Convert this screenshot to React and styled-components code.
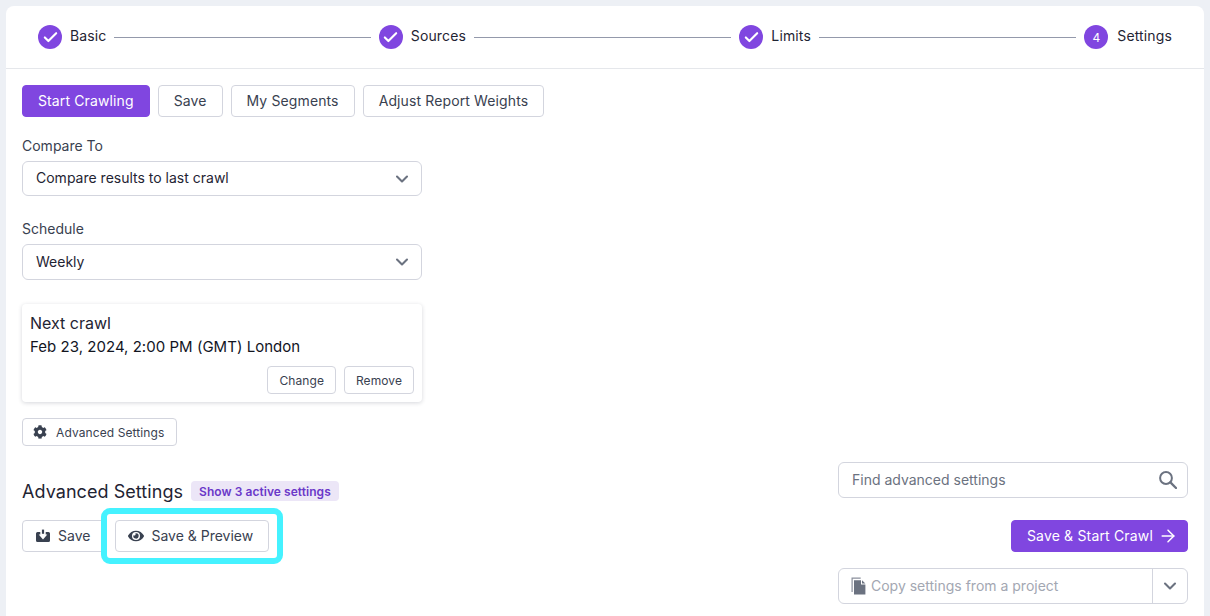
import React from "react";
import styled, { createGlobalStyle } from "styled-components";
import { FaCog, FaEye } from "react-icons/fa";
import { ArrowRight, Check, ChevronDown } from "lucide-react";

const Global = createGlobalStyle`
  html, body { margin: 0; padding: 0; height: 100%; overflow: hidden; }
  body { background: #edf0f5; font-family: Inter, "Liberation Sans", sans-serif; color: #1f2433; }
  * { box-sizing: border-box; }
`;

const Card = styled.main`
  margin: 6px 6px 0;
  height: 610px;
  background: #fff;
  border-radius: 8px 8px 0 0;
  overflow: hidden;
`;

const Stepper = styled.header`
  height: 63px;
  padding: 0 32px;
  display: flex;
  align-items: center;
  border-bottom: 1px solid #e5e7eb;
`;

const StepDot = styled.span`
  flex: none;
  width: 24px;
  height: 24px;
  border-radius: 50%;
  background: #8046e0;
  color: #fff;
  display: flex;
  align-items: center;
  justify-content: center;
  font-size: 12px;
`;

const StepLabel = styled.span`
  margin-left: ${(p) => p.$ml}px;
  padding-bottom: 3px;
  font-size: 14px;
  letter-spacing: 0.14px;
  color: #1f2433;
`;

const StepLine = styled.span`
  flex: 1;
  height: 1px;
  margin: 0 8px 0 ${(p) => p.$ml}px;
  background: #9499ab;
`;

const Body = styled.div`
  padding: 16px 16px 0;
`;

const Row = styled.div`
  display: flex;
  gap: ${(p) => p.$gap ?? 8}px;
  align-items: center;
`;

const Button = styled.button`
  height: ${(p) => p.$h ?? 32}px;
  padding: ${(p) => p.$padding ?? "0 15px"};
  display: inline-flex;
  align-items: center;
  gap: ${(p) => p.$iconGap ?? 8}px;
  font-family: inherit;
  font-size: ${(p) => p.$size ?? 14}px;
  letter-spacing: ${(p) => p.$spacing ?? 0.12}px;
  color: ${(p) => (p.$primary ? "#fff" : "#394150")};
  background: ${(p) => (p.$primary ? "#8046e0" : "#fff")};
  border: 1px solid ${(p) => (p.$primary ? "#8046e0" : "#d3d5de")};
  border-radius: 4px;
  white-space: nowrap;
`;

const Text = styled.span`
  padding-bottom: ${(p) => p.$pb ?? 2}px;
`;

const Field = styled.div`
  width: 400px;
  margin-top: ${(p) => p.$mt}px;
`;

const Label = styled.div`
  font-size: 14px;
  line-height: 20px;
  color: #394150;
  margin-bottom: 5px;
`;

const Select = styled.div`
  height: ${(p) => p.$h}px;
  padding: 0 9px 0 13px;
  display: flex;
  align-items: center;
  justify-content: space-between;
  border: 1px solid #d3d5de;
  border-radius: 6px;
  font-size: 14px;
  color: #1f2433;
  svg { color: #6b7280; }
`;

const NextCrawl = styled.section`
  width: 400px;
  height: 98px;
  margin-top: 24px;
  padding: 9px 8px 8px;
  border-radius: 4px;
  background: #fff;
  box-shadow: 0 1px 4px rgba(30, 35, 60, 0.18);
  display: flex;
  flex-direction: column;
`;

const NextTitle = styled.div`
  font-size: 16px;
  line-height: 20px;
  color: #1f2433;
`;

const NextDate = styled.div`
  font-size: 15px;
  letter-spacing: 0.03px;
  line-height: 20px;
  margin-top: 4px;
  color: #12151f;
`;

const CardActions = styled.div`
  margin-top: auto;
  display: flex;
  justify-content: flex-end;
  gap: 8px;
`;

const AdvancedToggle = styled(Button)`
  margin-top: 16px;
  display: flex;
  svg { color: #394150; }
`;

const Bottom = styled.div`
  display: flex;
  justify-content: space-between;
  align-items: flex-start;
  margin-top: 16px;
`;

const LeftColumn = styled.div`
  display: flex;
  flex-direction: column;
`;

const TitleRow = styled.div`
  display: flex;
  align-items: center;
  gap: 8px;
  height: 20px;
  margin-top: 19px;
`;

const Heading = styled.h2`
  margin: 0;
  font-size: 18px;
  font-weight: 400;
  letter-spacing: 0.06px;
  color: #1f2433;
`;

const Badge = styled.span`
  height: 20px;
  padding: 0 8px;
  display: inline-flex;
  align-items: center;
  border-radius: 4px;
  background: #ece6f7;
  color: #6b38c9;
  font-size: 12px;
  font-weight: 600;
  letter-spacing: 0.05px;
`;

const ButtonRow = styled(Row)`
  margin-top: 19px;
  svg { color: #394150; }
`;

const Highlighted = styled.span`
  position: relative;
  display: inline-flex;
  &::after {
    content: "";
    position: absolute;
    inset: -12px -14px;
    border: 6.5px solid #45f2ff;
    border-radius: 9px;
    pointer-events: none;
  }
`;

const RightColumn = styled.div`
  width: 350px;
  display: flex;
  flex-direction: column;
  align-items: flex-end;
`;

const SearchBox = styled.div`
  width: 100%;
  height: 36px;
  padding: 0 10px 0 13px;
  display: flex;
  align-items: center;
  justify-content: space-between;
  border: 1px solid #d3d5de;
  border-radius: 6px;
  font-size: 14px;
  color: #6b7280;
`;

const StartCrawl = styled(Button)`
  margin-top: 22px;
`;

const CopySelect = styled.div`
  width: 100%;
  height: 36px;
  margin-top: 16px;
  display: flex;
  border: 1px solid #d3d5de;
  border-radius: 6px;
`;

const CopyValue = styled.div`
  flex: 1;
  padding-left: 12px;
  display: flex;
  align-items: center;
  gap: 5px;
  font-size: 14px;
  color: #a3a7b2;
`;

const CopyToggle = styled.div`
  width: 35px;
  display: flex;
  align-items: center;
  justify-content: center;
  border-left: 1px solid #d3d5de;
  color: #6b7280;
`;

const SaveIcon = () => (
  <svg width="14" height="14" viewBox="0 0 14 14" aria-hidden="true">
    <path fill="currentColor" d="M1.5 3h11A1.5 1.5 0 0 1 14 4.5v7a1.5 1.5 0 0 1-1.5 1.5h-11A1.5 1.5 0 0 1 0 11.5v-7A1.5 1.5 0 0 1 1.5 3z" />
    <path fill="#fff" d="M4.3 2.6h1.2V0h3v2.6h1.2V5.6h1.6L7 10.4 2.7 5.6h1.6z" />
    <path fill="currentColor" d="M5.9 0.6h2.2v4.2h-2.2z" />
  </svg>
);

const SearchIcon = () => (
  <svg width="18" height="18" viewBox="0 0 18 18" fill="none" stroke="#6b7280" aria-hidden="true">
    <circle cx="7" cy="7" r="5.9" strokeWidth="2" />
    <path d="M11.4 11.4L17 17" strokeWidth="2.3" strokeLinecap="round" />
  </svg>
);

const CopyIcon = () => (
  <svg width="15" height="18" viewBox="0 0 15 18" aria-hidden="true">
    <path fill="none" stroke="#8a8f9c" strokeWidth="1.2" d="M1.1 15V1.1h8.6" />
    <path fill="#6b7280" d="M3 3.2h7v4.2h4.4V17.6H3z" />
    <path fill="#6b7280" d="M11 3.2l3.4 3.4H11z" />
  </svg>
);

const steps = [
  { label: "Basic", labelGap: 8, lineStart: 7 },
  { label: "Sources", labelGap: 8, lineStart: 8 },
  { label: "Limits", labelGap: 8, lineStart: 8 },
  { label: "Settings", labelGap: 9, number: 4 },
];

export default function App() {
  return (
    <>
      <Global />
      <Card>
        <Stepper>
          {steps.map((s, i) => (
            <React.Fragment key={s.label}>
              <StepDot>{s.number ?? <Check size={17} strokeWidth={3} />}</StepDot>
              <StepLabel $ml={s.labelGap}>{s.label}</StepLabel>
              {i < steps.length - 1 && <StepLine $ml={s.lineStart} />}
            </React.Fragment>
          ))}
        </Stepper>
        <Body>
          <Row>
            <Button $primary><Text>Start Crawling</Text></Button>
            <Button><Text>Save</Text></Button>
            <Button><Text>My Segments</Text></Button>
            <Button><Text>Adjust Report Weights</Text></Button>
          </Row>
          <Field $mt={19}>
            <Label>Compare To</Label>
            <Select $h={35}>
              <Text>Compare results to last crawl</Text>
              <ChevronDown size={20} strokeWidth={2.5} />
            </Select>
          </Field>
          <Field $mt={23}>
            <Label>Schedule</Label>
            <Select $h={36}>
              <Text $pb={1}>Weekly</Text>
              <ChevronDown size={20} strokeWidth={2.5} />
            </Select>
          </Field>
          <NextCrawl>
            <NextTitle>Next crawl</NextTitle>
            <NextDate>Feb 23, 2024, 2:00 PM (GMT) London</NextDate>
            <CardActions>
              <Button $h={28} $padding="0 11px" $size={12} $spacing={0.08}>Change</Button>
              <Button $h={28} $padding="0 11px" $size={12} $spacing={0.08}>Remove</Button>
            </CardActions>
          </NextCrawl>
          <AdvancedToggle $h={28} $padding="0 12px 0 10px" $size={12} $iconGap={9} $spacing={0.1}>
            <FaCog size={14} />
            Advanced Settings
          </AdvancedToggle>
          <Bottom>
            <LeftColumn>
              <TitleRow>
                <Heading>Advanced Settings</Heading>
                <Badge>Show 3 active settings</Badge>
              </TitleRow>
              <ButtonRow>
                <Button $padding="0 16px 0 13px" $spacing={0}>
                  <SaveIcon />
                  <Text>Save</Text>
                </Button>
                <Highlighted>
                  <Button $padding="0 15px 0 12px" $iconGap={7} $spacing={0}>
                    <FaEye size={16} />
                    <Text>Save &amp; Preview</Text>
                  </Button>
                </Highlighted>
              </ButtonRow>
            </LeftColumn>
            <RightColumn>
              <SearchBox>
                <Text>Find advanced settings</Text>
                <SearchIcon />
              </SearchBox>
              <StartCrawl $primary $padding="0 9px 0 15px" $iconGap={5} $spacing={0.17}>
                <Text>Save &amp; Start Crawl</Text>
                <ArrowRight size={20} strokeWidth={1.8} />
              </StartCrawl>
              <CopySelect>
                <CopyValue>
                  <CopyIcon />
                  <Text>Copy settings from a project</Text>
                </CopyValue>
                <CopyToggle>
                  <ChevronDown size={20} strokeWidth={2.5} />
                </CopyToggle>
              </CopySelect>
            </RightColumn>
          </Bottom>
        </Body>
      </Card>
    </>
  );
}
